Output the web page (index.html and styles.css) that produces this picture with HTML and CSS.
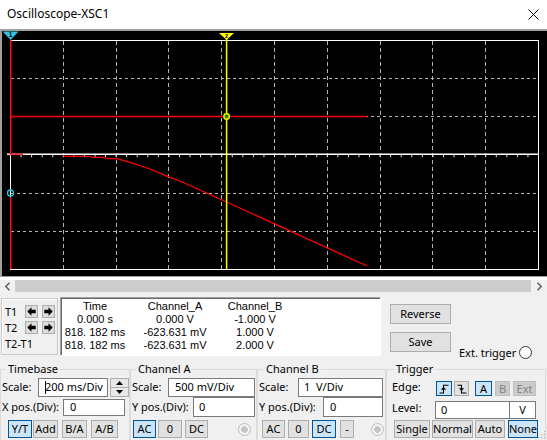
FILE: index.html
```html
<!DOCTYPE html>
<html>
<head>
<meta charset="utf-8">
<title>Oscilloscope-XSC1</title>
<link rel="stylesheet" href="styles.css">
</head>
<body>
<div class="titlebar">
  <span class="title">Oscilloscope-XSC1</span>
  <svg class="close" width="11" height="11" viewBox="0 0 11 11"><path d="M0.5 0.5L10.5 10.5M10.5 0.5L0.5 10.5" stroke="#000" stroke-width="1"/></svg>
</div>

<div class="screen">
  <svg class="plot" width="545" height="245" viewBox="2 31 545 245">
    <defs>
      <pattern id="ticks" x="10" y="155" width="10.56" height="3" patternUnits="userSpaceOnUse">
        <rect x="0" y="0" width="1" height="2.5" fill="#e8e8e8"/>
      </pattern>
    </defs>
    <rect x="2" y="31" width="545" height="245" fill="#000"/>
    <g stroke="#b4b4b4" stroke-width="1" stroke-dasharray="4 3">
      <line x1="63.5" y1="41" x2="63.5" y2="269"/>
      <line x1="116.5" y1="41" x2="116.5" y2="269"/>
      <line x1="168.5" y1="41" x2="168.5" y2="269"/>
      <line x1="221.5" y1="41" x2="221.5" y2="269"/>
      <line x1="274.5" y1="41" x2="274.5" y2="269"/>
      <line x1="327.5" y1="41" x2="327.5" y2="269"/>
      <line x1="380.5" y1="41" x2="380.5" y2="269"/>
      <line x1="432.5" y1="41" x2="432.5" y2="269"/>
      <line x1="485.5" y1="41" x2="485.5" y2="269"/>
    </g>
    <g stroke="#b4b4b4" stroke-width="1" stroke-dasharray="3 3">
      <line x1="11" y1="78.5" x2="538" y2="78.5"/>
      <line x1="11" y1="116.5" x2="538" y2="116.5"/>
      <line x1="11" y1="193.5" x2="538" y2="193.5"/>
      <line x1="11" y1="231.5" x2="538" y2="231.5"/>
    </g>
    <rect x="10.5" y="40.5" width="528" height="229" fill="none" stroke="#fff" stroke-width="1"/>
    <line x1="7" y1="154.3" x2="538" y2="154.3" stroke="#fff" stroke-width="1.6"/>
    <rect x="10" y="155" width="528" height="2.5" fill="url(#ticks)"/>
    <line x1="10" y1="116.5" x2="367" y2="116.5" stroke="#ff0000" stroke-width="1.6"/>
    <polyline fill="none" stroke="#ff0000" stroke-width="1.3" points="10,154.2 23,154.2"/>
    <polyline fill="none" stroke="#ff0000" stroke-width="1.3" points="63,155.6 66,156.3 90,156.3 92,157.3 105,157.3 106,158.7 117,158.7 130,162.3 150,169 170,177.3 180,181 242,209 367,266"/>
    <line x1="10.8" y1="40" x2="10.8" y2="154" stroke="#ff0000" stroke-width="1.5"/>
    <line x1="10.8" y1="197" x2="10.8" y2="269" stroke="#ff0000" stroke-width="1.5"/>
    <line x1="226.6" y1="39" x2="226.6" y2="269" stroke="#ffff00" stroke-width="1.5"/>
    <circle cx="10.5" cy="193" r="3" fill="none" stroke="#2ec5e8" stroke-width="1.3"/>
    <circle cx="226.6" cy="116.5" r="2.8" fill="#2e8b00" stroke="#ffff00" stroke-width="1.3"/>
    <polygon points="2.7,31.5 18.5,31.5 10.6,40" fill="#2ec5e8"/>
    <text x="10.6" y="37.4" font-family="Liberation Sans, sans-serif" font-size="6.5" font-weight="bold" text-anchor="middle" fill="#000">1</text>
    <polygon points="219,33 234,33 226.6,40" fill="#ffff00"/>
    <text x="226.6" y="38.4" font-family="Liberation Sans, sans-serif" font-size="5.5" font-weight="bold" text-anchor="middle" fill="#000">2</text>
  </svg>
</div>
<div class="strip"></div>
<div class="hscroll">
  <div class="sbtn"><svg width="7" height="9" viewBox="0 0 7 9"><path d="M5.5 0.8L1.8 4.5L5.5 8.2" fill="none" stroke="#606060" stroke-width="1.5"/></svg></div>
  <div class="track"></div>
  <div class="sbtn right"><svg width="7" height="9" viewBox="0 0 7 9"><path d="M1.5 0.8L5.2 4.5L1.5 8.2" fill="none" stroke="#606060" stroke-width="1.5"/></svg></div>
</div>

<div class="readout">
  <div class="tpanel">
    <div class="trow">
      <span class="tlabel">T1</span>
      <span class="arr"><svg width="9" height="9" viewBox="0 0 9 9"><path d="M0.3 4.5L4.5 0.3V2.8H8.7V6.2H4.5V8.7Z" fill="#000"/></svg></span>
      <span class="arr"><svg width="9" height="9" viewBox="0 0 9 9"><path d="M8.7 4.5L4.5 0.3V2.8H0.3V6.2H4.5V8.7Z" fill="#000"/></svg></span>
    </div>
    <div class="trow">
      <span class="tlabel">T2</span>
      <span class="arr"><svg width="9" height="9" viewBox="0 0 9 9"><path d="M0.3 4.5L4.5 0.3V2.8H8.7V6.2H4.5V8.7Z" fill="#000"/></svg></span>
      <span class="arr"><svg width="9" height="9" viewBox="0 0 9 9"><path d="M8.7 4.5L4.5 0.3V2.8H0.3V6.2H4.5V8.7Z" fill="#000"/></svg></span>
    </div>
    <div class="tdiff">T2-T1</div>
  </div>
  <div class="data">
    <span>Time</span><span>Channel_A</span><span>Channel_B</span>
    <span>0.000 s</span><span>0.000 V</span><span>-1.000 V</span>
    <span>818. 182 ms</span><span>-623.631 mV</span><span>1.000 V</span>
    <span>818. 182 ms</span><span>-623.631 mV</span><span>2.000 V</span>
  </div>
  <div class="actions">
    <span class="btn big">Reverse</span>
    <span class="btn big">Save</span>
  </div>
  <div class="ext">
    <span>Ext. trigger</span>
    <span class="radio"></span>
  </div>
</div>

<div class="controls">
  <fieldset class="grp tb">
    <legend>Timebase</legend>
    <div class="row">
      <span class="lbl tb-l1">Scale:</span>
      <span class="field tb-scale"><span class="caret"></span>200 ms/Div</span>
      <span class="spin">
        <span class="half"><svg width="7" height="4" viewBox="0 0 7 4"><path d="M0 4L3.5 0L7 4Z" fill="#000"/></svg></span>
        <span class="half"><svg width="7" height="4" viewBox="0 0 7 4"><path d="M0 0L3.5 4L7 0Z" fill="#000"/></svg></span>
      </span>
    </div>
    <div class="row">
      <span class="lbl tb-l2">X pos.(Div):</span>
      <span class="field tb-pos">0</span>
    </div>
    <div class="row btns">
      <span class="btn sel tb-yt">Y/T</span>
      <span class="btn tb-add">Add</span>
      <span class="btn tb-ba">B/A</span>
      <span class="btn tb-ab">A/B</span>
    </div>
  </fieldset>

  <fieldset class="grp cha">
    <legend>Channel A</legend>
    <div class="row">
      <span class="lbl ca-l1">Scale:</span>
      <span class="field ca-scale">500 mV/Div</span>
    </div>
    <div class="row">
      <span class="lbl ca-l2">Y pos.(Div):</span>
      <span class="field ca-pos">0</span>
    </div>
    <div class="row btns">
      <span class="btn sel ca-ac">AC</span>
      <span class="btn ca-0">0</span>
      <span class="btn ca-dc">DC</span>
      <span class="radio off ca-radio"></span>
    </div>
  </fieldset>

  <fieldset class="grp chb">
    <legend>Channel B</legend>
    <div class="row">
      <span class="lbl cb-l1">Scale:</span>
      <span class="field cb-scale">1&nbsp; V/Div</span>
    </div>
    <div class="row">
      <span class="lbl cb-l2">Y pos.(Div):</span>
      <span class="field cb-pos">0</span>
    </div>
    <div class="row btns">
      <span class="btn cb-ac">AC</span>
      <span class="btn cb-0">0</span>
      <span class="btn sel cb-dc">DC</span>
      <span class="btn cb-minus">-</span>
      <span class="radio off cb-radio"></span>
    </div>
  </fieldset>

  <fieldset class="grp trg">
    <legend>Trigger</legend>
    <div class="row">
      <span class="lbl tr-l1">Edge:</span>
      <span class="btn sel small tr-rise"><svg width="10" height="10" viewBox="0 0 10 10"><path d="M0.5 9H4.5V1.2H9.5M2.6 5.8L4.5 3.6L6.4 5.8" fill="none" stroke="#000" stroke-width="1.1"/></svg></span>
      <span class="btn small tr-fall"><svg width="10" height="10" viewBox="0 0 10 10"><path d="M0.5 1.2H4.5V9H9.5M2.6 4.2L4.5 6.4L6.4 4.2" fill="none" stroke="#000" stroke-width="1.1"/></svg></span>
      <span class="btn sel small tr-a">A</span>
      <span class="btn dis small tr-b">B</span>
      <span class="btn dis small tr-ext">Ext</span>
    </div>
    <div class="row tr-row2">
      <span class="lbl tr-l2">Level:</span>
      <span class="field tr-level">0</span>
      <span class="field tr-unit">V</span>
    </div>
    <div class="row btns tr-row3">
      <span class="btn tr-single">Single</span>
      <span class="btn tr-normal">Normal</span>
      <span class="btn tr-auto">Auto</span>
      <span class="btn sel tr-none">None</span>
    </div>
  </fieldset>
</div>

<svg class="grip" width="9" height="9" viewBox="0 0 9 9">
  <g fill="#b0b0b0"><rect x="7" y="1" width="1.2" height="1.2"/><rect x="4" y="4" width="1.2" height="1.2"/><rect x="7" y="4" width="1.2" height="1.2"/><rect x="1" y="7" width="1.2" height="1.2"/><rect x="4" y="7" width="1.2" height="1.2"/><rect x="7" y="7" width="1.2" height="1.2"/></g>
</svg>
</body>
</html>
```

FILE: styles.css
```css
* { box-sizing: border-box; }
html, body { margin: 0; padding: 0; }
body {
  width: 547px;
  height: 440px;
  overflow: hidden;
  position: relative;
  background: #f0f0f0;
  color: #000;
  font-family: "Noto Sans", "Liberation Sans", sans-serif;
  font-size: 11px;
  line-height: 1.2;
}

/* title bar */
.titlebar {
  height: 29px;
  background: #fff;
  display: flex;
  align-items: center;
  justify-content: space-between;
  padding: 0 8px 1px 7px;
}
.title { font-size: 12px; }
.close { display: block; }

/* scope display */
.screen {
  height: 248px;
  background: #000;
  border-top: 2px solid #a0a0a0;
  border-left: 2px solid #a0a0a0;
  border-bottom: 1px solid #a0a0a0;
}
.plot { display: block; }
.strip { height: 3px; background: #fff; }
.hscroll { height: 12px; display: flex; }
.sbtn {
  width: 15px;
  display: flex;
  align-items: center;
  justify-content: center;
  background: #f0f0f0;
}
.sbtn.right { width: 16px; }
.sbtn svg { display: block; }
.track { flex: 1; background: #cdcdcd; }

/* readout row */
.readout {
  height: 65px;
  display: flex;
  align-items: flex-start;
}
.tpanel {
  flex: none;
  margin: 6px 0 0 1px;
  width: 57px;
  height: 57px;
  border: 1px solid #c9c9c9;
  box-shadow: inset 1px 1px #fff;
  padding: 6px 0 0 3px;
}
.trow {
  display: flex;
  align-items: center;
  height: 13px;
  margin-bottom: 3px;
}
.tlabel { width: 20px; }
.arr {
  width: 13px;
  height: 13px;
  background: #dcdcdc;
  border: 1px solid #adadad;
  display: flex;
  align-items: center;
  justify-content: center;
}
.arr + .arr { margin-left: 4px; }
.arr svg { display: block; }
.tdiff { margin-top: 3px; line-height: 13px; }

.data {
  flex: none;
  margin: 5px 0 0 2px;
  width: 321px;
  height: 59px;
  background: #fff;
  border: 1px solid;
  border-color: #a0a0a0 #fff #fff #a0a0a0;
  box-shadow: inset 1px 1px #696969;
  padding: 2px 0 0 1px;
  display: grid;
  grid-template-columns: 66px 94px 66px;
  grid-auto-rows: 13px;
  align-content: start;
  font-family: "Liberation Sans", Arial, sans-serif;
  font-size: 11px;
  line-height: 13px;
  text-align: center;
  white-space: nowrap;
}

.actions {
  flex: none;
  margin: 12px 0 0 9px;
  display: flex;
  flex-direction: column;
  gap: 8px;
}
.btn.big { width: 61px; height: 20px; }

.ext {
  flex: none;
  margin: 54px 0 0 8px;
  display: flex;
  align-items: center;
  gap: 3px;
  height: 13px;
  white-space: nowrap;
}
.radio {
  flex: none;
  width: 13px;
  height: 13px;
  border-radius: 50%;
  border: 1px solid #333;
  background: #fff;
}
.radio.off {
  border-color: #bcbcbc;
  background: radial-gradient(circle, #c4c4c4 0 3px, #f4f4f4 3.6px);
}

/* buttons */
.btn {
  flex: none;
  display: flex;
  align-items: center;
  justify-content: center;
  height: 18px;
  background: #e1e1e1;
  border: 1px solid #adadad;
  white-space: nowrap;
}
.btn.sel { background: #cce4f7; border-color: #005499; }
.btn.dis { background: #cccccc; border-color: #bfbfbf; color: #838383; }
.btn svg { display: block; }

/* lower control groups */
.controls {
  display: flex;
  align-items: flex-start;
  margin-top: 4px;
}
fieldset.grp {
  flex: none;
  margin: 0;
  padding: 0;
  min-width: 0;
  height: 100px;
  border: 1px solid #dcdcdc;
}
.grp legend {
  margin-left: 5px;
  padding: 0 2px;
  height: 16px;
  line-height: 16px;
}
.tb { width: 130px; }
.cha { width: 127px; margin-left: 2px; }
.chb { width: 129px; margin-left: 1px; }
.chb legend { margin-left: 6px; }
.trg { width: 160px; }
.trg legend { margin-left: 7px; }

.row {
  display: flex;
  align-items: center;
  height: 20px;
  white-space: nowrap;
}
.row.btns { height: 18px; margin-top: 3px; }
.lbl { flex: none; margin-left: 1px; }

.field {
  flex: none;
  display: flex;
  align-items: center;
  height: 19px;
  background: #fff;
  border: 1px solid #7a7a7a;
  padding-left: 5px;
  white-space: pre;
}
.caret {
  width: 1px;
  height: 13px;
  background: #000;
  margin-right: -1px;
}
.spin {
  flex: none;
  margin-left: 2px;
  width: 19px;
  height: 19px;
  border: 1px solid #adadad;
  background: #e8e8e8;
  display: flex;
  flex-direction: column;
}
.spin .half {
  flex: 1;
  display: flex;
  align-items: center;
  justify-content: center;
}
.spin .half + .half { border-top: 1px solid #adadad; }

/* Timebase */
.tb-l1 { width: 36px; }
.tb-scale { width: 70px; padding-left: 6px; }
.tb-l2 { width: 61px; }
.tb-pos { width: 62px; height: 17px; padding-left: 6px; }
.tb-yt { margin-left: 7px; width: 24px; }
.tb-add { margin-left: 1px; width: 25px; }
.tb-ba { margin-left: 4px; width: 25px; }
.tb-ab { margin-left: 4px; width: 27px; }

/* Channel A */
.ca-l1 { width: 36px; }
.ca-scale { width: 87px; padding-left: 6px; }
.ca-l2 { width: 61px; }
.ca-pos { width: 62px; height: 20px; }
.ca-ac { margin-left: 2px; width: 23px; }
.ca-0 { margin-left: 2px; width: 24px; }
.ca-dc { margin-left: 3px; width: 23px; }
.ca-radio { margin-left: 30px; }

/* Channel B */
.cb-l1 { width: 39px; }
.cb-scale { width: 85px; }
.cb-l2 { width: 64px; }
.cb-pos { width: 60px; height: 20px; padding-left: 6px; }
.cb-ac { margin-left: 4px; width: 23px; }
.cb-0 { margin-left: 3px; width: 21px; }
.cb-dc { margin-left: 3px; width: 24px; }
.cb-minus { margin-left: 4px; width: 14px; }
.cb-radio { margin-left: 17px; }

/* Trigger */
.tr-l1 { margin-left: 5px; width: 44px; }
.btn.small { height: 15px; align-self: flex-end; margin-bottom: 1px; }
.tr-rise { width: 16px; }
.tr-fall { margin-left: 2px; width: 15px; }
.tr-a { margin-left: 6px; width: 17px; }
.tr-b { margin-left: 3px; width: 15px; }
.tr-ext { margin-left: 3px; width: 23px; }
.tr-row2 { height: 23px; align-items: flex-end; padding-bottom: 1px; }
.tr-l2 { margin-left: 5px; width: 43px; align-self: center; }
.tr-level { width: 75px; height: 18px; }
.tr-unit { width: 26px; height: 18px; border-left: none; padding-left: 0; justify-content: center; }
.row.tr-row3 { margin-top: 0; }
.tr-single { margin-left: 7px; width: 36px; }
.tr-normal { margin-left: 2px; width: 41px; }
.tr-auto { margin-left: 2px; width: 30px; }
.tr-none { margin-left: 3px; width: 30px; }

.grip { position: absolute; right: 1px; bottom: 1px; }
```
